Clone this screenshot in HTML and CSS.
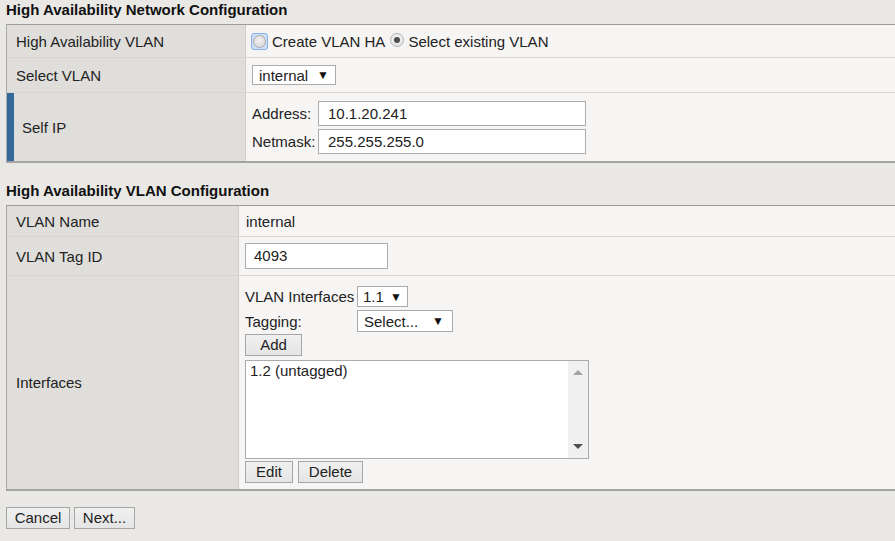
FILE: index.html
```html
<!DOCTYPE html>
<html>
<head>
<meta charset="utf-8">
<title>High Availability Network Configuration</title>
<link rel="stylesheet" href="styles.css">
</head>
<body>
<h2 class="section-title first">High Availability Network Configuration</h2>
<div class="form-table net">
  <div class="row r-havlan">
    <div class="label">High Availability VLAN</div>
    <div class="value radios">
      <span class="radio focus"><span class="dot"></span></span>
      <span class="radio-text">Create VLAN HA</span>
      <span class="radio checked"><span class="dot"></span></span>
      <span class="radio-text">Select existing VLAN</span>
    </div>
  </div>
  <div class="row r-select">
    <div class="label">Select VLAN</div>
    <div class="value">
      <span class="select sel-internal"><span class="sel-text">internal</span><span class="arrow">▼</span></span>
    </div>
  </div>
  <div class="row r-selfip">
    <div class="label marked">Self IP</div>
    <div class="value ip-fields">
      <div class="field"><span class="field-label">Address:</span><input class="text-input ip" type="text" value="10.1.20.241"></div>
      <div class="field"><span class="field-label">Netmask:</span><input class="text-input ip" type="text" value="255.255.255.0"></div>
    </div>
  </div>
</div>

<h2 class="section-title second">High Availability VLAN Configuration</h2>
<div class="form-table vlan">
  <div class="row r-name">
    <div class="label">VLAN Name</div>
    <div class="value">internal</div>
  </div>
  <div class="row r-tag">
    <div class="label">VLAN Tag ID</div>
    <div class="value"><input class="text-input tag" type="text" value="4093"></div>
  </div>
  <div class="row r-ifaces">
    <div class="label">Interfaces</div>
    <div class="value ifaces">
      <div class="iface-line">
        <span class="iface-label">VLAN Interfaces</span>
        <span class="select sel-iface"><span class="sel-text">1.1</span><span class="arrow">▼</span></span>
      </div>
      <div class="iface-line">
        <span class="iface-label">Tagging:</span>
        <span class="select sel-tagging"><span class="sel-text">Select...</span><span class="arrow">▼</span></span>
      </div>
      <div class="btn-line"><button class="btn btn-add">Add</button></div>
      <div class="listbox">
        <div class="list-items"><div class="list-item">1.2 (untagged)</div></div>
        <div class="scrollbar"><span class="sb-up"></span><span class="sb-down"></span></div>
      </div>
      <div class="btn-line pair"><button class="btn btn-edit">Edit</button><button class="btn btn-delete">Delete</button></div>
    </div>
  </div>
</div>

<div class="actions">
  <button class="btn btn-cancel">Cancel</button>
  <button class="btn btn-next">Next...</button>
</div>
</body>
</html>
```
FILE: styles.css
```css
html, body {
  margin: 0;
  background: #e9e8e5;
}
body {
  padding: 0 0 0 6px;
  overflow: hidden;
  font-family: "Liberation Sans", Arial, sans-serif;
  font-size: 15px;
  color: #222;
}

.section-title {
  margin: 0;
  font-size: 15px;
  font-weight: bold;
  line-height: 18px;
  color: #111;
}
.section-title.first {
  padding-top: 1px;
  height: 23px;
}
.section-title.second {
  padding-top: 19px;
  height: 23px;
}

.form-table {
  border-top: 1px solid #9c9c9c;
  border-left: 1px solid #a8a8a8;
  border-bottom: 2px solid #a4a4a4;
}
.row {
  display: grid;
  border-bottom: 1px solid #d7d6d3;
}
.row:last-child {
  border-bottom: none;
}
.net .row { grid-template-columns: 239px 1fr; }
.vlan .row { grid-template-columns: 232px 1fr; }

.label {
  background: #dfdedb;
  display: flex;
  align-items: center;
  padding-left: 9px;
  border-right: 1px solid #cfcecb;
}
.label.marked {
  border-left: 7px solid #336a9b;
  padding-left: 8px;
}
.value {
  background: #f6f5f3;
  display: flex;
  align-items: center;
}

/* rows of the first table */
.r-havlan { height: 32px; }
.r-havlan .value { padding-left: 5px; padding-top: 1px; }
.r-select { height: 34px; }
.r-select .value { padding-left: 6px; }
.r-selfip { height: 68px; }

.radio {
  display: inline-block;
  box-sizing: border-box;
  position: relative;
}
.radio.focus {
  width: 17px;
  height: 17px;
  border: 1px solid #86b0ea;
  border-radius: 3px;
  background: #cfe0f8;
}
.radio.focus .dot {
  position: absolute;
  left: 1px;
  top: 1px;
  width: 13px;
  height: 13px;
  box-sizing: border-box;
  border-radius: 50%;
  border: 1px solid #a9a9a9;
  background: radial-gradient(circle at 50% 40%, #f2f2f2 0%, #dcdcdc 70%, #cfcfcf 100%);
}
.radio.checked {
  width: 14px;
  height: 14px;
  margin-left: 5px;
  border-radius: 50%;
  border: 1px solid #b3b3b3;
  background: radial-gradient(circle at 50% 40%, #f7f7f7 0%, #dedede 100%);
  margin-top: -3px;
}
.radio.checked .dot {
  position: absolute;
  left: 3px;
  top: 3px;
  width: 6px;
  height: 6px;
  border-radius: 50%;
  background: #4d4d4d;
}
.radio-text {
  margin-left: 4px;
}

.select {
  display: inline-flex;
  align-items: center;
  box-sizing: border-box;
  height: 20px;
  background: #fff;
  border: 1px solid #ababab;
  color: #222;
}
.select .arrow {
  font-size: 12px;
  color: #111;
  margin-left: auto;
}
.sel-internal {
  width: 84px;
  padding: 0 6px 0 6px;
}
.sel-iface {
  width: 51px;
  padding: 0 5px 0 5px;
  height: 21px;
}
.sel-tagging {
  width: 96px;
  padding: 0 8px 0 6px;
  height: 22px;
}

.ip-fields {
  flex-direction: column;
  align-items: flex-start;
  justify-content: flex-start;
  padding: 8px 0 0 6px;
  gap: 3px;
}
.field {
  display: flex;
  align-items: center;
}
.field-label {
  width: 66px;
}
.text-input {
  box-sizing: border-box;
  border: 1px solid #acacac;
  background: #fff;
  font-family: "Liberation Sans", Arial, sans-serif;
  font-size: 15px;
  color: #222;
  margin: 0;
  outline: none;
}
.text-input.ip {
  width: 268px;
  height: 25px;
  padding: 0 0 0 9px;
}
.text-input.tag {
  width: 143px;
  height: 26px;
  padding: 0 0 0 8px;
}

/* second table */
.r-name { height: 30px; }
.r-name .value { padding-left: 7px; }
.r-tag { height: 38px; }
.r-tag .value { padding-left: 6px; padding-bottom: 1px; }
.ifaces {
  flex-direction: column;
  align-items: flex-start;
  padding: 10px 0 6px 6px;
}
.iface-line {
  display: flex;
  align-items: center;
  height: 21px;
  margin-bottom: 3px;
}
.iface-line + .iface-line {
  margin-bottom: 2px;
  height: 22px;
}
.iface-label {
  width: 112px;
}
.btn-line {
  display: flex;
  gap: 5px;
}

.btn {
  box-sizing: border-box;
  height: 22px;
  margin: 0;
  padding: 0;
  text-align: center;
  font-family: "Liberation Sans", Arial, sans-serif;
  font-size: 15px;
  color: #222;
  background: linear-gradient(#f0f0f0, #e5e5e5);
  border: 1px solid #a6a6a6;
  border-radius: 0;
  line-height: 18px;
}
.btn-add { width: 57px; }
.btn-edit { width: 48px; }
.btn-delete { width: 65px; }
.btn-cancel { width: 64px; }
.btn-next { width: 61px; }

.listbox {
  box-sizing: border-box;
  width: 344px;
  height: 99px;
  margin: 4px 0 2px;
  border: 1px solid #ababab;
  background: #fff;
  display: flex;
}
.list-items {
  flex: 1;
  padding: 1px 0 0 4px;
}
.list-item {
  line-height: 17px;
}
.scrollbar {
  width: 20px;
  background: #f0f0f0;
  position: relative;
}
.sb-up, .sb-down {
  position: absolute;
  left: 5px;
  width: 0;
  height: 0;
  border-left: 5px solid transparent;
  border-right: 5px solid transparent;
}
.sb-up {
  top: 9px;
  border-bottom: 5px solid #a3a3a3;
}
.sb-down {
  bottom: 9px;
  border-top: 5px solid #505050;
}

.actions {
  display: flex;
  gap: 4px;
  padding-top: 16px;
}
```
